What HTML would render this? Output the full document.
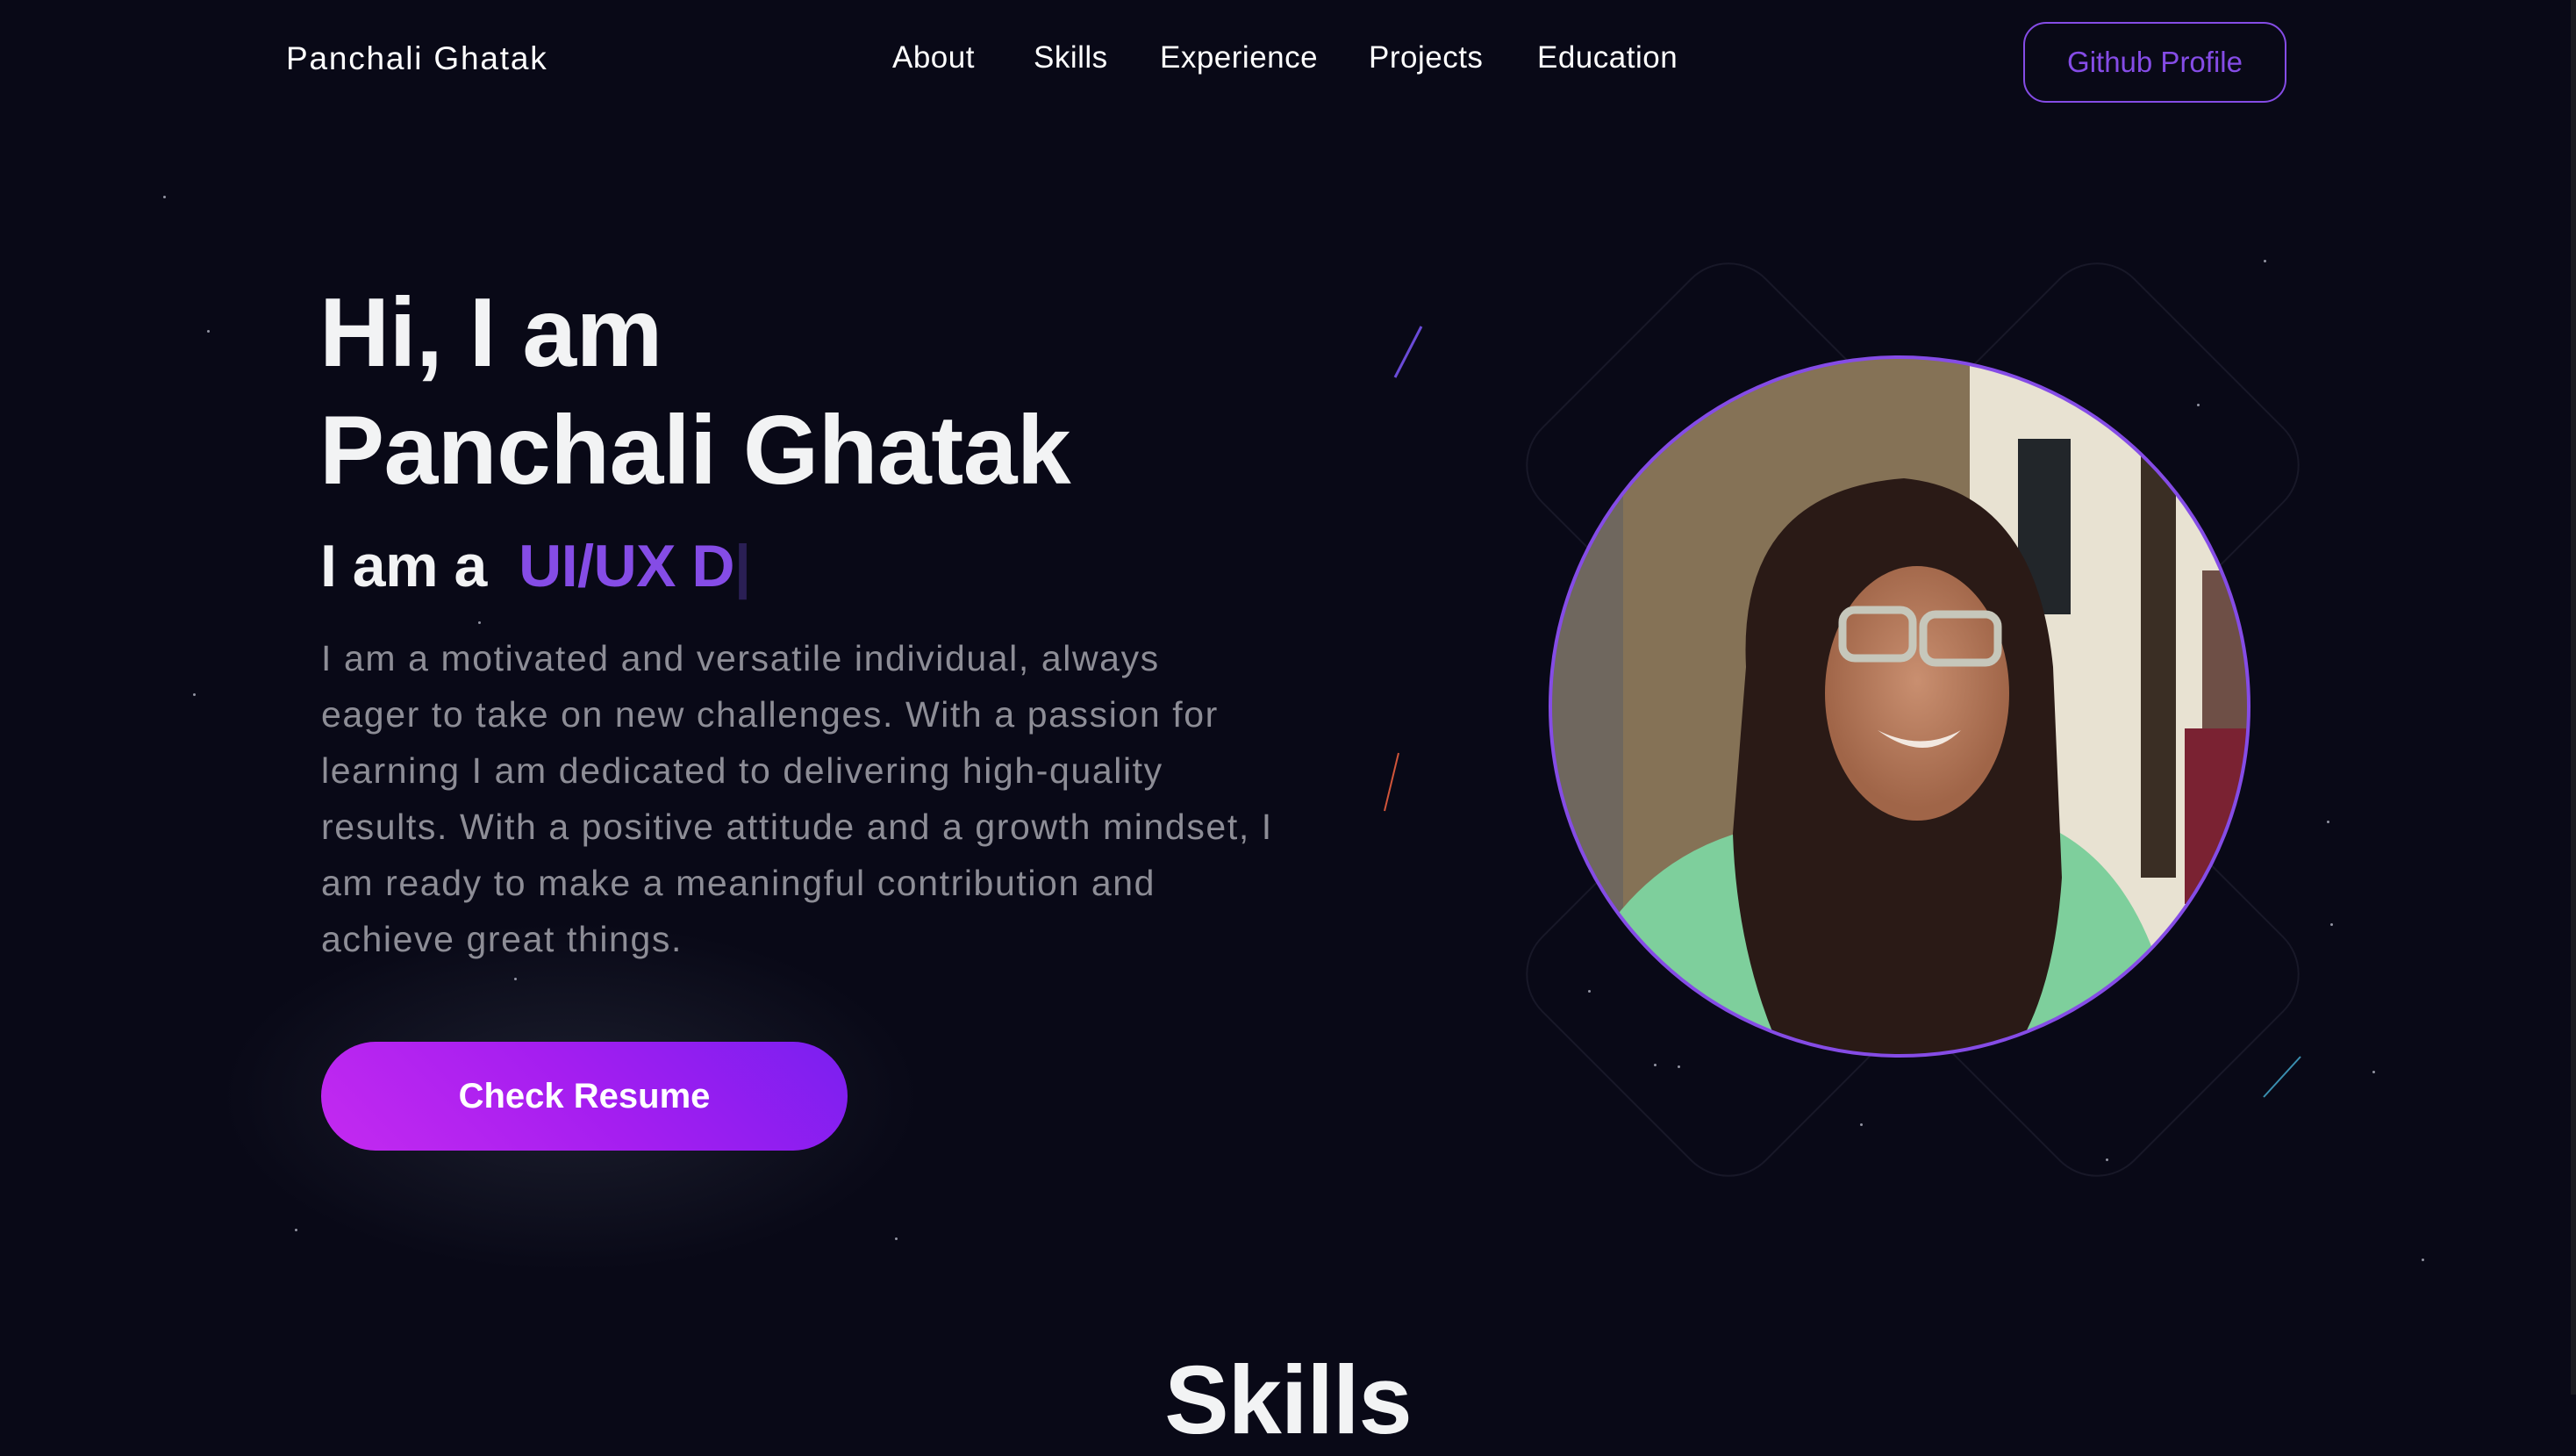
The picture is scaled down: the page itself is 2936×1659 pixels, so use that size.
<!DOCTYPE html>
<html><head><meta charset="utf-8"><style>
*{margin:0;padding:0;box-sizing:border-box}
html,body{width:2936px;height:1589px;overflow:hidden;background:#090917;font-family:"Liberation Sans",sans-serif;color:#f2f3f4}
.abs{position:absolute}
.nav{position:absolute;top:46px;font-size:35px;color:#fff;white-space:nowrap;letter-spacing:0.5px}
.s{position:absolute;width:3px;height:3px;border-radius:50%;background:#cfd0e0;opacity:.7}
</style></head><body>
<div class="abs" style="right:0;top:0;width:6px;height:1589px;background:#1b1b22"></div>
<div class="nav" style="left:326px;font-size:37px;letter-spacing:1.8px">Panchali Ghatak</div>
<div class="nav" style="left:1017px">About</div>
<div class="nav" style="left:1178px">Skills</div>
<div class="nav" style="left:1322px">Experience</div>
<div class="nav" style="left:1560px">Projects</div>
<div class="nav" style="left:1752px">Education</div>
<div class="abs" style="left:2306px;top:25px;width:300px;height:92px;border:2px solid #854ce6;border-radius:26px;color:#854ce6;font-size:33px;display:flex;align-items:center;justify-content:center">Github Profile</div>

<div class="abs" style="left:250px;top:1050px;width:800px;height:400px;border-radius:50%;background:radial-gradient(ellipse at center,rgba(40,44,60,.6),rgba(9,9,23,0) 70%)"></div>

<div class="abs" style="left:364px;top:312px;font-size:111px;font-weight:bold;line-height:134px;letter-spacing:-0.5px">Hi, I am<br>Panchali Ghatak</div>
<div class="abs" style="left:365px;top:606px;font-size:68px;font-weight:bold;letter-spacing:-0.5px">I am a <span style="color:#854ce6;margin-left:18px">UI/UX D</span><span style="color:#2a1f55">|</span></div>
<div class="abs" style="left:366px;top:718px;font-size:41px;line-height:64px;color:#8d8d96;white-space:nowrap;letter-spacing:1.6px">I am a motivated and versatile individual, always<br>eager to take on new challenges. With a passion for<br>learning I am dedicated to delivering high-quality<br>results. With a positive attitude and a growth mindset, I<br>am ready to make a meaningful contribution and<br>achieve great things.</div>
<div class="abs" style="left:366px;top:1187px;width:600px;height:124px;border-radius:62px;background:linear-gradient(225deg,#7a1ff0,#a51ef0 50%,#c42af0);display:flex;align-items:center;justify-content:center;font-size:40px;font-weight:bold;color:#fff">Check Resume</div>

<svg class="abs" style="left:0;top:0" width="2936" height="1589">
<g stroke="#181828" stroke-width="2" fill="none">
<rect x="1790" y="350" width="360" height="360" rx="60" transform="rotate(45 1970 530)"/>
<rect x="2210" y="350" width="360" height="360" rx="60" transform="rotate(45 2390 530)"/>
<rect x="1790" y="930" width="360" height="360" rx="60" transform="rotate(45 1970 1110)"/>
<rect x="2210" y="930" width="360" height="360" rx="60" transform="rotate(45 2390 1110)"/>
</g>
<line x1="1620" y1="372" x2="1590" y2="430" stroke="#6a4bd8" stroke-width="3"/>
<line x1="1594" y1="858" x2="1578" y2="924" stroke="#d2553a" stroke-width="2"/>
<line x1="2622" y1="1204" x2="2580" y2="1250" stroke="#3a8fb0" stroke-width="2"/>
<defs><clipPath id="c"><circle cx="2165" cy="805" r="397"/></clipPath>
<radialGradient id="sk" cx=".5" cy=".45" r=".5"><stop offset="0" stop-color="#c98f70"/><stop offset="1" stop-color="#a06548"/></radialGradient></defs>
<g clip-path="url(#c)">
<rect x="1760" y="400" width="820" height="820" fill="#857256"/>
<rect x="1760" y="400" width="90" height="820" fill="#6f675e"/>
<rect x="2245" y="400" width="340" height="820" fill="#e8e2d2"/>
<rect x="2300" y="500" width="60" height="200" fill="#22262a"/>
<rect x="2440" y="500" width="40" height="500" fill="#3a2e24"/>
<rect x="2510" y="650" width="70" height="400" fill="#6e4f46"/>
<rect x="2490" y="830" width="80" height="200" fill="#7a2232"/>
<path d="M1830 1060 Q1900 960 2020 940 L2330 940 Q2420 980 2460 1100 L2460 1220 L1830 1220Z" fill="#7ecf9c"/>
<path d="M1990 760 Q1980 560 2170 545 Q2320 560 2340 760 L2350 1000 Q2340 1150 2280 1220 L2040 1220 Q1980 1100 1975 950Z" fill="#2a1a16"/>
<ellipse cx="2185" cy="790" rx="105" ry="145" fill="url(#sk)"/>
<rect x="2100" y="695" width="80" height="55" rx="14" fill="none" stroke="#c6c7bb" stroke-width="9"/>
<rect x="2192" y="700" width="85" height="55" rx="14" fill="none" stroke="#c6c7bb" stroke-width="9"/>
<path d="M2140 832 Q2190 857 2235 832 Q2195 872 2140 832Z" fill="#f2e8e0"/>
</g>
<circle cx="2165" cy="805" r="398" fill="none" stroke="#854ce6" stroke-width="4"/>
</svg>

<div class="abs" style="left:0;right:0;top:1532px;text-align:center;font-size:110px;font-weight:bold;letter-spacing:-1px">Skills</div>

<div class="s" style="left:186px;top:223px"></div><div class="s" style="left:236px;top:376px"></div>
<div class="s" style="left:545px;top:708px"></div><div class="s" style="left:586px;top:1114px"></div>
<div class="s" style="left:2580px;top:296px"></div><div class="s" style="left:2504px;top:460px"></div>
<div class="s" style="left:2652px;top:935px"></div><div class="s" style="left:2656px;top:1052px"></div>
<div class="s" style="left:1810px;top:1128px"></div><div class="s" style="left:1912px;top:1214px"></div>
<div class="s" style="left:2120px;top:1280px"></div><div class="s" style="left:2400px;top:1320px"></div>
<div class="s" style="left:2760px;top:1434px"></div><div class="s" style="left:220px;top:790px"></div>
<div class="s" style="left:1885px;top:1212px"></div><div class="s" style="left:2704px;top:1220px"></div>
<div class="s" style="left:336px;top:1400px"></div><div class="s" style="left:1020px;top:1410px"></div>
</body></html>
